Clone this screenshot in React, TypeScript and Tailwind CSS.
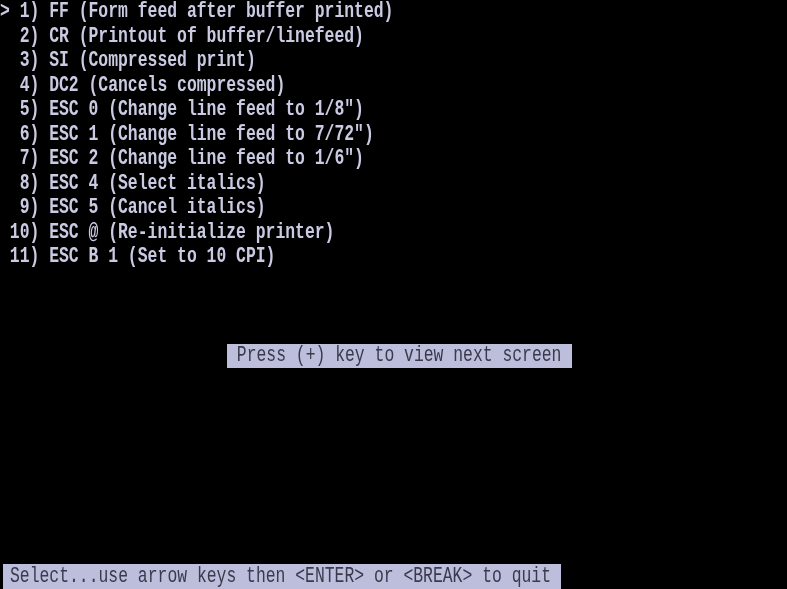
const lines = [
  "> 1) FF (Form feed after buffer printed)",
  "  2) CR (Printout of buffer/linefeed)",
  "  3) SI (Compressed print)",
  "  4) DC2 (Cancels compressed)",
  '  5) ESC 0 (Change line feed to 1/8")',
  '  6) ESC 1 (Change line feed to 7/72")',
  '  7) ESC 2 (Change line feed to 1/6")',
  "  8) ESC 4 (Select italics)",
  "  9) ESC 5 (Cancel italics)",
  " 10) ESC @ (Re-initialize printer)",
  " 11) ESC B 1 (Set to 10 CPI)",
];

function Row({ children }: { children: string }) {
  return (
    <div className="flex items-center">
      <span className="inline-block whitespace-pre leading-none scale-y-[1.3] text-[#cacae2]">
        {children}
      </span>
    </div>
  );
}

export default function App() {
  return (
    <div className="w-[787px] h-[589px] bg-black overflow-hidden">
      <div
        className="grid grid-rows-[repeat(24,minmax(0,1fr))] h-full font-bold blur-[0.4px]"
        style={{ fontFamily: '"Liberation Mono", monospace', fontSize: "16.4px" }}
      >
        {lines.map((l, i) => (
          <Row key={i}>{l}</Row>
        ))}
        <div />
        <div />
        <div />
        <div className="flex">
          <div className="ml-[227px] w-[345px] bg-[#bdbddc] flex items-center">
            <span className="inline-block whitespace-pre leading-none scale-y-[1.3] text-[#3a3a4c] font-normal">
              {" Press (+) key to view next screen"}
            </span>
          </div>
        </div>
        <div />
        <div />
        <div />
        <div />
        <div />
        <div />
        <div />
        <div />
        <div className="flex">
          <div className="ml-[3px] w-[558px] pl-[7px] bg-[#bdbddc] flex items-center">
            <span className="inline-block whitespace-pre leading-none scale-y-[1.3] text-[#3a3a4c] font-normal">
              {"Select...use arrow keys then <ENTER> or <BREAK> to quit"}
            </span>
          </div>
        </div>
      </div>
    </div>
  );
}
